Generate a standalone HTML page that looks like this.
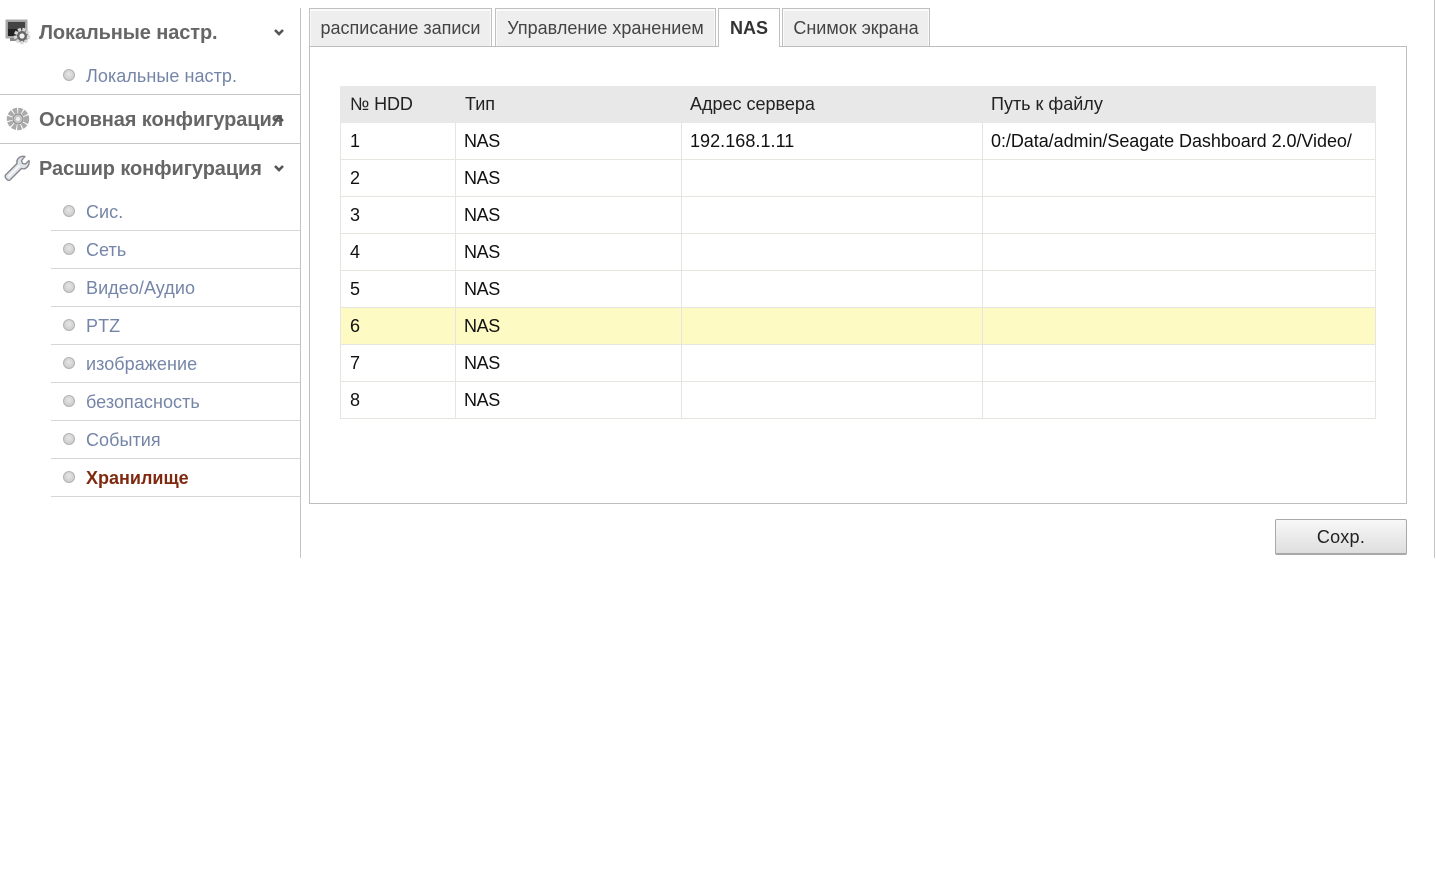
<!DOCTYPE html>
<html lang="ru"><head><meta charset="utf-8"><title>NAS</title>
<style>
html,body{margin:0;padding:0;background:#fff;width:1437px;height:892px;overflow:hidden}
body{font-family:"Liberation Sans",Arial,sans-serif;position:relative}
.a{position:absolute;white-space:nowrap}
.l{position:absolute;background:#c4c4c4}
.h{font-size:20px;font-weight:bold;color:#666;left:39px;line-height:24px;letter-spacing:-.1px}
.s{font-size:18px;color:#7585a8;left:86px;line-height:22px;letter-spacing:.06px}
.sep{position:absolute;left:51px;width:249px;height:1px;background:#d6d6d6}
.dot{position:absolute;left:63px;width:12px;height:12px;border-radius:50%;box-sizing:border-box;border:1.5px solid #b4b4b4;background:radial-gradient(circle at 50% 40%,#e6e6e6,#c4c4c4)}
.tab{position:absolute;top:8px;height:38px;box-sizing:border-box;border:1px solid #c0c0c0;border-bottom:0;background:#eee;box-shadow:inset 1px 2px 0 #fafafa,inset -1px 0 0 #fafafa;font-size:18px;color:#444;line-height:38px;text-align:center;white-space:nowrap}
.c{position:absolute;font-size:18px;color:#111;line-height:22px;white-space:nowrap}
.n{letter-spacing:-.4px}
.r{position:absolute;left:340px;width:1036px;height:1px;background:#e6e6e0}
.v{position:absolute;top:123px;height:295px;width:1px;background:#e6e6e0}
</style></head><body>

<svg class="a" style="left:4px;top:18px" width="28" height="28" viewBox="0 0 28 28">
<rect x="2.5" y="2.5" width="20" height="17" fill="#999" stroke="#aaa" stroke-width="2"/>
<rect x="4" y="4" width="17" height="7" fill="#444"/><rect x="4" y="11" width="17" height="7" fill="#222"/>
<rect x="6" y="20" width="12" height="3" fill="#888"/>
<circle cx="18" cy="18" r="6.5" fill="#888" stroke="#d8d8d8" stroke-width="3.5" stroke-dasharray="3 1.4"/>
<circle cx="18" cy="18" r="5" fill="#666"/>
<circle cx="18" cy="18" r="2.6" fill="#f0f0f0"/>
</svg>
<svg class="a" style="left:6px;top:107px" width="24" height="24" viewBox="0 0 24 24">
<circle cx="12" cy="12" r="8.5" fill="none" stroke="#aaa" stroke-width="5.5" stroke-dasharray="4 1"/>
<circle cx="12" cy="12" r="5" fill="#c4c4c4" stroke="#8a8a8a" stroke-width="1"/>
<circle cx="12" cy="12" r="2" fill="#f0f0f0"/>
</svg>
<svg class="a" style="left:3px;top:154px" width="28" height="28" viewBox="0 0 28 28">
<path d="M2.5 21 L14 9.5 C13 5.5 16.5 1.5 22 2.5 L18.5 6.5 L19.5 9.5 L22.5 10 L26 6.5 C27 12 22.5 16 18.5 14.5 L7 26 C5 27.5 1 23.5 2.5 21 Z" fill="#dfe4e9" stroke="#84848c" stroke-width="1.3" stroke-linejoin="round"/>
<path d="M5.5 22.5 L16.5 11.5" stroke="#fff" stroke-width="1.5"/>
</svg>

<div class="a h" style="top:21px">Локальные настр.</div>
<div class="a h" style="top:108px">Основная конфигурация</div>
<div class="a h" style="top:157px">Расшир конфигурация</div>

<svg class="a" style="left:273px;top:28px" width="12" height="9" viewBox="0 0 12 9"><path d="M2 2 L6 6 L10 2" fill="none" stroke="#555" stroke-width="2.6"/></svg>
<svg class="a" style="left:273px;top:115px" width="12" height="9" viewBox="0 0 12 9"><path d="M2 6 L6 2 L10 6" fill="none" stroke="#555" stroke-width="2.6"/></svg>
<svg class="a" style="left:273px;top:164px" width="12" height="9" viewBox="0 0 12 9"><path d="M2 2 L6 6 L10 2" fill="none" stroke="#555" stroke-width="2.6"/></svg>

<div class="l" style="left:0;top:94px;width:300px;height:1px"></div>
<div class="l" style="left:0;top:143px;width:300px;height:1px"></div>
<div class="l" style="left:300px;top:8px;width:1px;height:550px"></div>
<div class="l" style="left:1434px;top:0;width:1px;height:558px"></div>

<div class="dot" style="top:69px"></div><div class="a s" style="top:65px">Локальные настр.</div>
<div class="dot" style="top:205px"></div><div class="a s" style="top:201px">Сис.</div><div class="sep" style="top:230px"></div>
<div class="dot" style="top:243px"></div><div class="a s" style="top:239px">Сеть</div><div class="sep" style="top:268px"></div>
<div class="dot" style="top:281px"></div><div class="a s" style="top:277px">Видео/Аудио</div><div class="sep" style="top:306px"></div>
<div class="dot" style="top:319px"></div><div class="a s" style="top:315px">PTZ</div><div class="sep" style="top:344px"></div>
<div class="dot" style="top:357px"></div><div class="a s" style="top:353px">изображение</div><div class="sep" style="top:382px"></div>
<div class="dot" style="top:395px"></div><div class="a s" style="top:391px">безопасность</div><div class="sep" style="top:420px"></div>
<div class="dot" style="top:433px"></div><div class="a s" style="top:429px">События</div><div class="sep" style="top:458px"></div>
<div class="dot" style="top:471px"></div><div class="a s" style="top:467px;color:#7f2a10;font-weight:bold;letter-spacing:0">Хранилище</div><div class="sep" style="top:496px"></div>

<div class="a" style="left:309px;top:46px;width:1098px;height:458px;box-sizing:border-box;border:1px solid #bdbdbd;background:#fff"></div>

<div class="tab" style="left:309px;width:183px">расписание записи</div>
<div class="tab" style="left:495px;width:221px">Управление хранением</div>
<div class="tab" style="left:718px;width:62px;height:39px;background:#fff;box-shadow:none;font-weight:bold;color:#333">NAS</div>
<div class="tab" style="left:782px;width:148px">Снимок экрана</div>

<div class="a" style="left:340px;top:86px;width:1036px;height:37px;background:#e8e8e8"></div>
<div class="a" style="left:340px;top:308px;width:1036px;height:37px;background:#fdfac4"></div>
<div class="v" style="left:340px"></div><div class="v" style="left:455px"></div><div class="v" style="left:681px"></div><div class="v" style="left:982px"></div><div class="v" style="left:1375px"></div>
<div class="r" style="top:159px"></div><div class="r" style="top:196px"></div><div class="r" style="top:233px"></div><div class="r" style="top:270px"></div><div class="r" style="top:307px"></div><div class="r" style="top:344px"></div><div class="r" style="top:381px"></div><div class="r" style="top:418px"></div>

<div class="c" style="left:350px;top:93px;color:#222;letter-spacing:-.1px">№ HDD</div><div class="c" style="left:465px;top:93px;color:#222">Тип</div><div class="c" style="left:690px;top:93px;color:#222">Адрес сервера</div><div class="c" style="left:991px;top:93px;color:#222">Путь к файлу</div>
<div class="c" style="left:350px;top:130px">1</div><div class="c n" style="left:464px;top:130px">NAS</div><div class="c" style="left:690px;top:130px;letter-spacing:.05px">192.168.1.11</div><div class="c" style="left:991px;top:130px;letter-spacing:-.05px">0:/Data/admin/Seagate Dashboard 2.0/Video/</div>
<div class="c" style="left:350px;top:167px">2</div><div class="c n" style="left:464px;top:167px">NAS</div>
<div class="c" style="left:350px;top:204px">3</div><div class="c n" style="left:464px;top:204px">NAS</div>
<div class="c" style="left:350px;top:241px">4</div><div class="c n" style="left:464px;top:241px">NAS</div>
<div class="c" style="left:350px;top:278px">5</div><div class="c n" style="left:464px;top:278px">NAS</div>
<div class="c" style="left:350px;top:315px">6</div><div class="c n" style="left:464px;top:315px">NAS</div>
<div class="c" style="left:350px;top:352px">7</div><div class="c n" style="left:464px;top:352px">NAS</div>
<div class="c" style="left:350px;top:389px">8</div><div class="c n" style="left:464px;top:389px">NAS</div>

<div class="a" style="left:1275px;top:519px;width:132px;height:36px;box-sizing:border-box;border:1px solid #a9a9a9;border-bottom:2px solid #a8a8a8;border-radius:2px;background:linear-gradient(#f8f8f8,#dedede);font-size:18px;line-height:34px;text-align:center;color:#222;letter-spacing:.3px">Сохр.</div>
</body></html>
